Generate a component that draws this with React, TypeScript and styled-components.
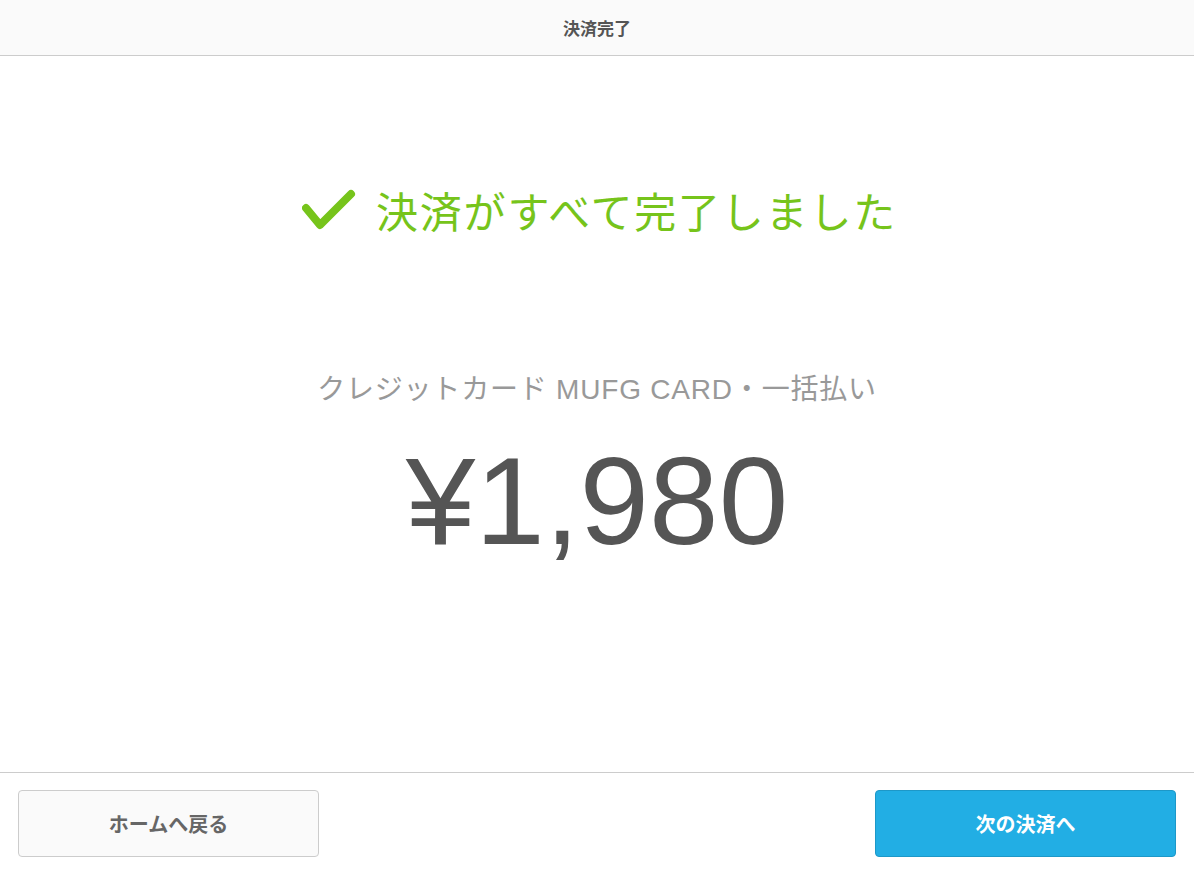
import { createGlobalStyle } from "styled-components";
import styled from "styled-components";

const GlobalStyle = createGlobalStyle`
  html, body {
    margin: 0;
    padding: 0;
    background: #ffffff;
  }
  body {
    font-family: "Noto Sans CJK JP", "Noto Sans", sans-serif;
  }
`;

const Screen = styled.div`
  display: flex;
  flex-direction: column;
  width: 1194px;
  height: 874px;
  background: #ffffff;
`;

const Header = styled.header`
  display: flex;
  align-items: center;
  justify-content: center;
  height: 55px;
  flex-shrink: 0;
  background: #fafafa;
  border-bottom: 1px solid #cccccc;
`;

const HeaderTitle = styled.h1`
  margin: 0;
  font-size: 17px;
  font-weight: 700;
  color: #555555;
`;

const Main = styled.main`
  flex: 1;
  display: flex;
  flex-direction: column;
  align-items: center;
  padding-top: 124px;
`;

const Done = styled.div`
  display: flex;
  align-items: center;
  gap: 20px;
  height: 60px;
  margin-left: 5px;
`;

const DoneText = styled.span`
  font-size: 42px;
  letter-spacing: 1.8px;
  color: #76c41b;
  line-height: 60px;
`;

const Method = styled.div`
  margin-top: 130px;
  font-family: "Liberation Sans", "Noto Sans CJK JP", sans-serif;
  font-size: 28px;
  letter-spacing: 0.8px;
  line-height: 40px;
  color: #999999;
`;

const Amount = styled.div`
  margin-top: 16px;
  font-family: "Liberation Sans", Arial, sans-serif;
  font-size: 125px;
  line-height: 150px;
  color: #555555;
`;

const Footer = styled.footer`
  display: flex;
  justify-content: space-between;
  align-items: center;
  height: 101px;
  flex-shrink: 0;
  padding: 0 18px;
  border-top: 1px solid #cccccc;
`;

const Button = styled.button<{ $primary?: boolean }>`
  width: 301px;
  height: 67px;
  border-radius: 4px;
  border: 1px solid ${({ $primary }) => ($primary ? "#1d98c8" : "#cccccc")};
  background: ${({ $primary }) => ($primary ? "#22aee4" : "#fafafa")};
  color: ${({ $primary }) => ($primary ? "#ffffff" : "#666666")};
  font-family: "Noto Sans CJK JP", "Noto Sans", sans-serif;
  font-size: 20px;
  font-weight: 700;
  cursor: pointer;
`;

const CheckIcon = () => (
  <svg width="54" height="42" viewBox="0 0 54 42">
    <path
      d="M4 19 L18 36 L49 5"
      fill="none"
      stroke="#76c41b"
      strokeWidth="8"
      strokeLinecap="round"
      strokeLinejoin="round"
    />
  </svg>
);

export default function App() {
  return (
    <>
      <GlobalStyle />
      <Screen>
        <Header>
          <HeaderTitle>決済完了</HeaderTitle>
        </Header>
        <Main>
          <Done>
            <CheckIcon />
            <DoneText>決済がすべて完了しました</DoneText>
          </Done>
          <Method>クレジットカード MUFG CARD・一括払い</Method>
          <Amount>¥1,980</Amount>
        </Main>
        <Footer>
          <Button>ホームへ戻る</Button>
          <Button $primary>次の決済へ</Button>
        </Footer>
      </Screen>
    </>
  );
}
